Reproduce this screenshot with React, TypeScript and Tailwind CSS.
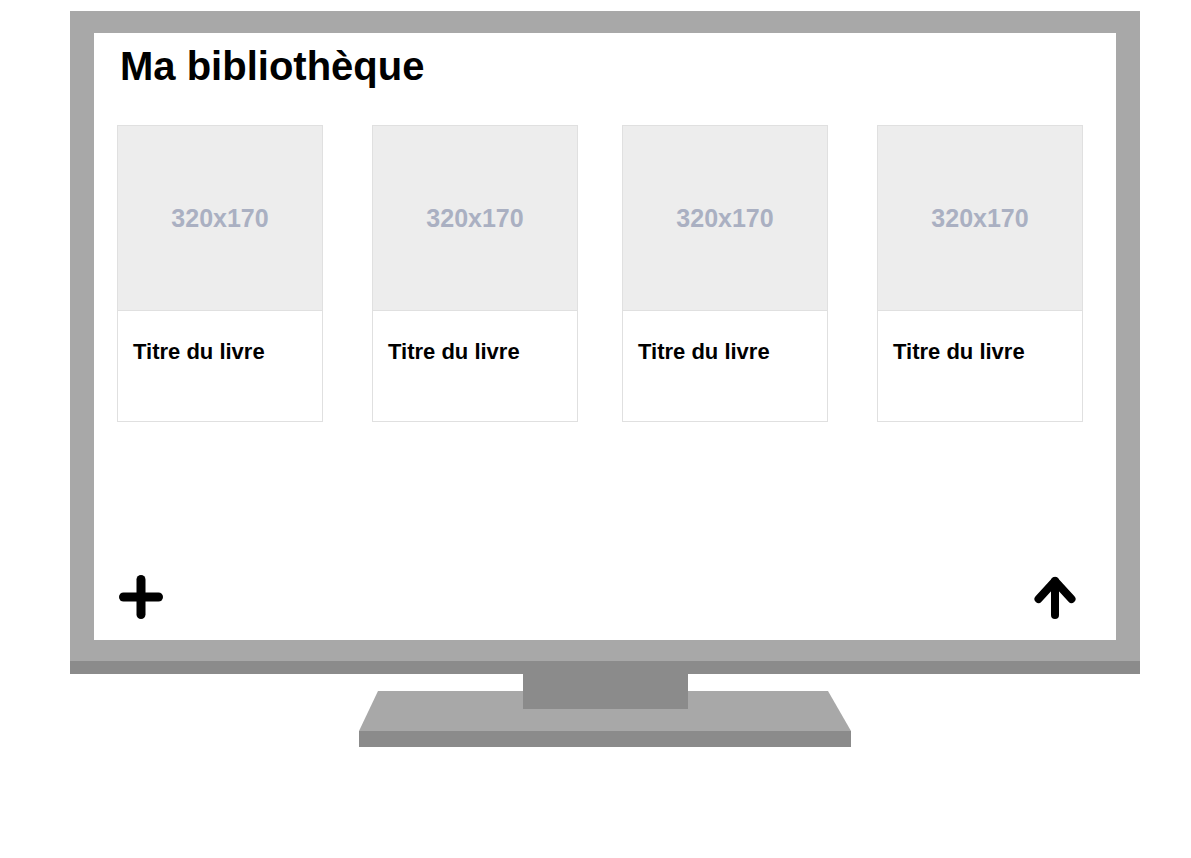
const books = [
  { title: "Titre du livre", ml: "ml-[23px]" },
  { title: "Titre du livre", ml: "ml-[49px]" },
  { title: "Titre du livre", ml: "ml-[44px]" },
  { title: "Titre du livre", ml: "ml-[49px]" },
]

const PlusIcon = () => (
  <svg width="44" height="44" viewBox="0 0 44 44">
    <line x1="22" y1="4.5" x2="22" y2="39.5" stroke="#000" strokeWidth="9" strokeLinecap="round" />
    <line x1="4.5" y1="22" x2="39.5" y2="22" stroke="#000" strokeWidth="9" strokeLinecap="round" />
  </svg>
)

const ArrowUpIcon = () => (
  <svg width="44" height="44" viewBox="0 0 44 44">
    <line x1="22" y1="6" x2="22" y2="40" stroke="#000" strokeWidth="8" strokeLinecap="round" />
    <polyline
      points="5.5,24 22,6 38.5,24"
      fill="none"
      stroke="#000"
      strokeWidth="8"
      strokeLinecap="round"
      strokeLinejoin="round"
    />
  </svg>
)

const BookCard = ({ title, ml }: { title: string; ml: string }) => (
  <div className={`${ml} w-[206px] h-[297px] border border-[#e0e0e0] bg-white flex flex-col`}>
    <div className="h-[185px] pt-[2px] bg-[#ededed] border-b border-[#e0e0e0] flex items-center justify-center">
      <span className="text-[25px] font-bold text-[#aab0c2]">320x170</span>
    </div>
    <div className="pt-[28px] px-[15px]">
      <h3 className="text-[22px] leading-[25px] font-bold text-black">{title}</h3>
    </div>
  </div>
)

export default function App() {
  return (
    <div
      className="w-[1191px] h-[858px] bg-white pt-[11px] pl-[70px]"
      style={{ fontFamily: '"Liberation Sans", Arial, sans-serif' }}
    >
      <div className="w-[1070px]">
        {/* Monitor frame */}
        <div className="bg-[#a8a8a8] pt-[22px] pl-[24px] pr-[24px] pb-[21px]">
          <div className="h-[607px] bg-white flex flex-col">
            <h1 className="mt-[10px] ml-[26px] text-[40px] leading-[46px] font-bold text-black">
              Ma bibliothèque
            </h1>
            <div className="mt-[36px] flex">
              {books.map((b, i) => (
                <BookCard key={i} title={b.title} ml={b.ml} />
              ))}
            </div>
            <div className="mt-auto pb-[21px] pl-[25px] pr-[39px] flex justify-between">
              <PlusIcon />
              <ArrowUpIcon />
            </div>
          </div>
        </div>
        <div className="h-[13px] bg-[#8b8b8b]" />

        {/* Stand */}
        <svg width="1070" height="74" viewBox="0 0 1070 74" className="block">
          <polygon points="308,17 758,17 781,57 289,57" fill="#a8a8a8" />
          <rect x="289" y="57" width="492" height="16" fill="#8b8b8b" />
          <rect x="453" y="0" width="165" height="35" fill="#8b8b8b" />
        </svg>
      </div>
    </div>
  )
}
